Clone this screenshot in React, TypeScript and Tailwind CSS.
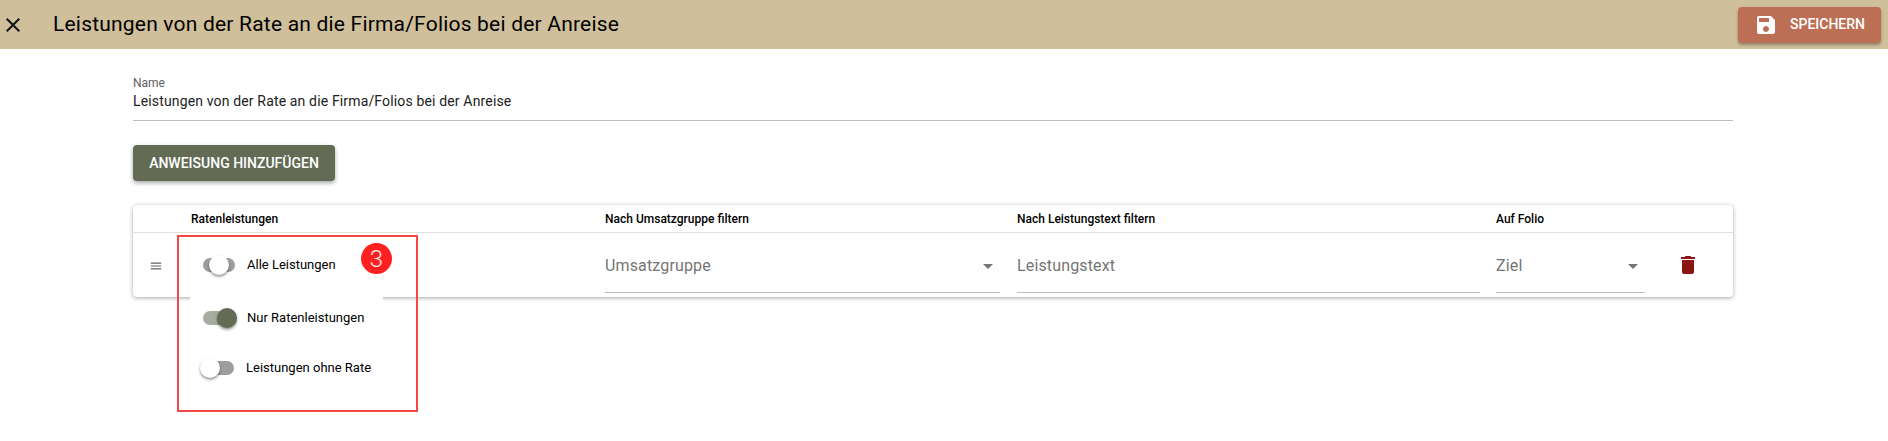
const CLOSE = "M19 6.41L17.59 5 12 10.59 6.41 5 5 6.41 10.59 12 5 17.59 6.41 19 12 13.41 17.59 19 19 17.59 13.41 12z";
const SAVE = "M17 3H5c-1.11 0-2 .9-2 2v14c0 1.1.89 2 2 2h14c1.1 0 2-.9 2-2V7l-4-4zm-5 16c-1.66 0-3-1.34-3-3s1.34-3 3-3 3 1.34 3 3-1.34 3-3 3zm3-10H5V5h10v4z";
const MENU = "M3 18h18v-2H3v2zm0-5h18v-2H3v2zm0-7v2h18V6H3z";
const ARROW = "M7 10l5 5 5-5z";
const TRASH = "M6 19c0 1.1.9 2 2 2h8c1.1 0 2-.9 2-2V7H6v12zM19 4h-3.5l-1-1h-5l-1 1H5v2h14V4z";

function Icon({ d, className }: { d: string; className: string }) {
  return (
    <svg viewBox="0 0 24 24" className={className} fill="currentColor">
      <path d={d} />
    </svg>
  );
}

function Toggle({ track, thumb, thumbLeft, trackClass }: { track: string; thumb: string; thumbLeft: string; trackClass: string }) {
  return (
    <div className={`relative h-[14px] rounded-full ${track} ${trackClass}`}>
      <div className={`absolute top-[-3px] size-[20px] rounded-full shadow-[0_2px_3px_rgba(0,0,0,0.3),0_1px_2px_rgba(0,0,0,0.2)] ${thumb} ${thumbLeft}`} />
    </div>
  );
}

function FilterField({ text, select, className }: { text: string; select?: boolean; className: string }) {
  return (
    <div className={`flex h-[60px] items-center justify-between border-b border-[#bdbdbd] pt-[7px] text-[16px] tracking-[0.15px] text-[#757575] ${className}`}>
      <span>{text}</span>
      {select && <Icon d={ARROW} className="size-[24px] text-[#757575]" />}
    </div>
  );
}

export default function App() {
  return (
    <div className="relative min-h-[441px] bg-white font-['Roboto',sans-serif] text-black">
      <header className="flex h-[49px] items-center justify-between bg-[#cfbf9b] pl-[1px] pr-[7px]">
        <div className="flex items-center">
          <Icon d={CLOSE} className="size-[24px] text-[#111]" />
          <h1 className="ml-[28px] text-[21px] leading-none tracking-[0.2px]">Leistungen von der Rate an die Firma/Folios bei der Anreise</h1>
        </div>
        <button className="flex h-[36px] w-[143px] items-center rounded-[4px] bg-[#bc6f55] pl-[16px] text-[14px] font-medium text-white shadow-[0_2px_3px_rgba(0,0,0,0.3)]">
          <Icon d={SAVE} className="size-[24px]" />
          <span className="ml-[12px]">SPEICHERN</span>
        </button>
      </header>

      <main className="relative ml-[133px] w-[1600px]">
        <div className="border-b border-[#bdbdbd] pt-[27px] pb-[9px]">
          <div className="text-[12px] leading-[14px] text-[#616161]">Name</div>
          <div className="mt-[1px] text-[14px] leading-[20px] tracking-[0.15px] text-[#212121]">Leistungen von der Rate an die Firma/Folios bei der Anreise</div>
        </div>

        <button className="mt-[24px] h-[36px] w-[202px] rounded-[4px] bg-[#636b55] text-[14px] font-medium text-white shadow-[0_2px_4px_rgba(0,0,0,0.35)]">
          ANWEISUNG HINZUFÜGEN
        </button>

        <div className="mt-[24px] h-[92px] rounded-[4px] bg-white shadow-[0_1px_4px_rgba(0,0,0,0.35)]">
          <div className="flex h-[28px] items-center border-b border-[#e0e0e0] text-[12px] font-medium">
            <span className="ml-[58px] w-[414px]">Ratenleistungen</span>
            <span className="w-[412px]">Nach Umsatzgruppe filtern</span>
            <span className="w-[479px]">Nach Leistungstext filtern</span>
            <span>Auf Folio</span>
          </div>
          <div className="flex items-start">
            <div className="flex h-[66px] w-[58px] items-center pl-[16px]">
              <Icon d={MENU} className="size-[14px] text-[#616161]" />
            </div>
            <div className="w-[414px]" />
            <FilterField text="Umsatzgruppe" select className="w-[395px] mr-[17px]" />
            <FilterField text="Leistungstext" className="w-[463px] mr-[16px]" />
            <FilterField text="Ziel" select className="w-[149px]" />
            <div className="flex h-[64px] items-center pl-[31px]">
              <Icon d={TRASH} className="size-[24px] text-[#8b1515]" />
            </div>
          </div>
        </div>

        {/* Dropdown mit den drei Schaltern */}
        <div className="absolute left-[57px] top-[190px] h-[160px] w-[193px] bg-white pt-[16px] text-[13px]">
          <div className="flex h-[20px] items-center pl-[13px]">
            <Toggle track="bg-[#9e9e9e]" trackClass="w-[32px]" thumb="bg-white" thumbLeft="left-[6px]" />
            <span className="ml-[12px]">Alle Leistungen</span>
          </div>
          <div className="mt-[33px] flex h-[20px] items-center pl-[13px]">
            <Toggle track="bg-[#a8ac9e]" trackClass="w-[32px]" thumb="bg-[#636b55]" thumbLeft="left-[14px]" />
            <span className="ml-[12px]">Nur Ratenleistungen</span>
          </div>
          <div className="mt-[30px] flex h-[20px] items-center pl-[13px]">
            <Toggle track="bg-[#9e9e9e]" trackClass="w-[31px]" thumb="bg-white" thumbLeft="left-[-3px]" />
            <span className="ml-[12px]">Leistungen ohne Rate</span>
          </div>
        </div>

        {/* Markierung aus der Anleitung */}
        <div className="absolute left-[44px] top-[186px] h-[177px] w-[241px] border-2 border-[#f44848]" />
        <div className="absolute left-[228px] top-[194px] flex size-[31px] items-center justify-center rounded-full bg-[#ff2020] text-[24px] font-light text-[#f5e6e6]">3</div>
      </main>
    </div>
  );
}
